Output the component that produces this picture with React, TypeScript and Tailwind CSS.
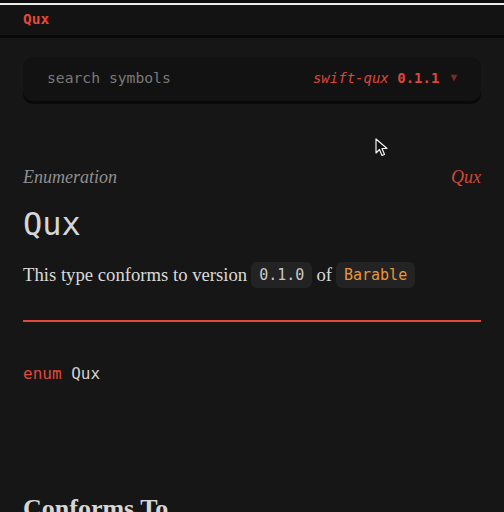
const mono = { fontFamily: '"DejaVu Sans Mono", "Liberation Mono", monospace' };
const serif = { fontFamily: '"Liberation Serif", "DejaVu Serif", serif' };

function Cursor() {
  return (
    <svg className="absolute left-[375px] top-[138px]" width="14" height="20" viewBox="0 0 14 20">
      <path d="M1 1 L1 15 L4.5 11.5 L7 17.5 L9.5 16.5 L7 10.5 L12 10.5 Z" fill="#111" stroke="#f2f2f2" strokeWidth="1.2" strokeLinejoin="round" />
    </svg>
  );
}

export default function App() {
  return (
    <div className="relative w-full h-[512px] overflow-hidden bg-[#161616]">
      <div className="h-[3px] bg-[#0d0d0d]" />
      <div className="h-[2px] bg-[#ececec]" />
      <header className="h-[33px] flex items-center px-[23px] bg-[#131313] border-b-[3px] border-[#0a0a0a]">
        <span className="text-[14.5px] font-bold text-[#e5483b]" style={mono}>Qux</span>
      </header>

      <main className="px-[23px]">
        <div className="mt-[19px] h-[44px] rounded-[10px] bg-[#121212] shadow-[0_3px_0_#090909] flex items-center justify-between pl-[24px] pr-[24px]">
          <span className="text-[14.7px] text-[#7a7a7a] -translate-y-px" style={mono}>search symbols</span>
          <div className="flex items-center gap-[11px] text-[14px] text-[#dd4639] -translate-y-px" style={mono}>
            <span>
              <span className="italic">swift-qux</span> <span className="font-bold">0.1.1</span>
            </span>
            <span className="text-[11px] text-[#7c2a24]">▼</span>
          </div>
        </div>

        <div className="mt-[64px] flex items-center justify-between h-[24px]" style={serif}>
          <span className="italic text-[18px] text-[#8f8f8f]">Enumeration</span>
          <span className="italic text-[18px] text-[#d2473c]">Qux</span>
        </div>

        <h1 className="mt-[15px] h-[40px] flex items-center text-[32px] text-[#d6d6d6] font-light" style={mono}>Qux</h1>

        <p className="mt-[18px] flex items-center gap-[4px] h-[26px] text-[18.7px] text-[#dadada]" style={serif}>
          <span>This type conforms to version</span>
          <code className="px-[8px] h-[26px] flex items-center rounded-[6px] bg-[#232323] text-[15px] text-[#c8c8c8]" style={mono}>0.1.0</code>
          <span>of</span>
          <code className="px-[8px] h-[26px] flex items-center rounded-[6px] bg-[#232323] text-[15px] text-[#e8953a]" style={mono}>Barable</code>
        </p>

        <div className="mt-[32px] h-[2px] bg-[#e5483b]" />

        <pre className="mt-[40px] h-[24px] flex items-center text-[16px]" style={mono}>
          <span className="text-[#e0483c]">enum</span>
          <span className="text-[#d0d0d0]">&nbsp;Qux</span>
        </pre>

        <h2 className="mt-[107px] text-[26px] leading-[32px] font-bold text-[#d6d6d6]" style={serif}>Conforms To</h2>
      </main>

      <Cursor />
    </div>
  );
}
